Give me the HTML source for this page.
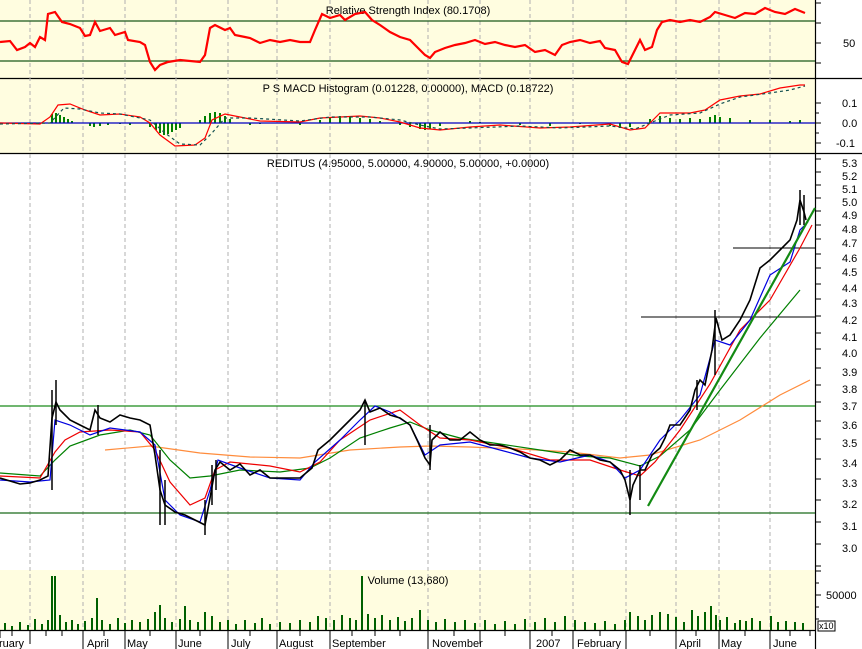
<!DOCTYPE html>
<html><head><meta charset="utf-8"><style>
html,body{margin:0;padding:0;background:#fff}
svg{display:block;font-family:"Liberation Sans",sans-serif}
</style></head><body>
<svg width="862" height="649" viewBox="0 0 862 649" xmlns="http://www.w3.org/2000/svg">
<rect x="0" y="0" width="862" height="649" fill="#fff"/>
<rect x="0" y="0" width="815" height="78" fill="#fffde0"/>
<rect x="0" y="79" width="815" height="74" fill="#fffde0"/>
<rect x="0" y="570" width="815" height="60" fill="#fffde0"/>
<g stroke="#000" stroke-width="1.2">
<line x1="0" y1="78.5" x2="862" y2="78.5"/>
<line x1="0" y1="153.5" x2="862" y2="153.5"/>
<line x1="815.5" y1="0" x2="815.5" y2="649"/>
<line x1="0" y1="630.5" x2="815" y2="630.5"/>
</g>
<g stroke="#b0b0b0" stroke-dasharray="4,3">
<line x1="30" y1="0" x2="30" y2="630"/><line x1="83" y1="0" x2="83" y2="630"/>
<line x1="125" y1="0" x2="125" y2="630"/><line x1="176" y1="0" x2="176" y2="630"/>
<line x1="228" y1="0" x2="228" y2="630"/><line x1="277" y1="0" x2="277" y2="630"/>
<line x1="330" y1="0" x2="330" y2="630"/><line x1="428" y1="0" x2="428" y2="630"/>
<line x1="480" y1="0" x2="480" y2="630"/><line x1="530" y1="0" x2="530" y2="630"/>
<line x1="573" y1="0" x2="573" y2="630"/><line x1="626" y1="0" x2="626" y2="630"/>
<line x1="676" y1="0" x2="676" y2="630"/><line x1="719" y1="0" x2="719" y2="630"/>
<line x1="770" y1="0" x2="770" y2="630"/>
</g>
<line x1="0" y1="21" x2="815" y2="21" stroke="#1a5a1a" stroke-width="1.2"/>
<line x1="0" y1="61" x2="815" y2="61" stroke="#1a5a1a" stroke-width="1.2"/>
<text x="408" y="14" font-size="11" text-anchor="middle">Relative Strength Index (80.1708)</text>
<polyline fill="none" stroke="#f00" stroke-width="2.2" points="0,42 10,41 17,50 25,47 30,43 35,47 40,37 45,40 48,14 55,12 62,22 70,24 80,28 85,36 90,35 95,22 100,31 110,28 115,35 125,32 128,40 140,42 145,45 150,62 155,70 160,65 168,62 180,60 200,62 205,55 210,28 215,25 225,30 230,28 235,35 245,37 250,38 260,43 270,40 280,42 290,40 300,42 310,42 315,30 322,14 330,18 340,15 345,20 355,14 365,12 372,20 380,25 390,32 400,37 410,40 418,48 425,55 430,58 435,52 445,48 455,45 465,43 475,40 485,44 495,42 505,45 515,47 525,45 535,52 545,50 555,55 562,45 570,42 580,40 590,43 600,41 605,48 615,50 622,62 628,64 635,50 640,40 645,50 652,47 657,30 662,22 670,20 680,22 690,20 700,22 710,17 715,12 725,15 735,18 745,13 755,14 765,8 775,12 785,14 795,9 805,13"/>
<text x="408" y="92" font-size="11" text-anchor="middle">P S MACD Histogram (0.01228, 0.00000), MACD (0.18722)</text>
<g stroke="#008000" stroke-width="2">
<path d="M52,123V114 M56,123V113 M60,123V115 M64,123V117 M68,123V119 M72,123V121 M90,123V126 M94,123V127 M100,123V126 M108,123V125 M120,123V124 M130,123V125 M150,123V127 M156,123V130 M160,123V133 M164,123V135 M168,123V134 M172,123V132 M176,123V130 M180,123V128 M200,123V120 M205,123V116 M210,123V113 M215,123V112 M220,123V113 M225,123V116 M230,123V119 M250,123V125 M260,123V124 M300,123V125 M320,123V120 M330,123V117 M340,123V116 M350,123V117 M360,123V118 M370,123V119 M380,123V121 M400,123V125 M410,123V127 M420,123V129 M425,123V130 M430,123V129 M440,123V126 M470,123V121 M480,123V122 M520,123V125 M550,123V126 M580,123V124 M610,123V126 M620,123V128 M630,123V127 M650,123V119 M660,123V116 M670,123V118 M680,123V119 M690,123V118 M700,123V119 M710,123V117 M715,123V115 M720,123V117 M730,123V118 M750,123V120 M770,123V120 M790,123V121 M800,123V120"/>
</g>
<line x1="0" y1="123" x2="815" y2="123" stroke="#0000c0" stroke-width="1.2"/>
<polyline fill="none" stroke="#f00" stroke-width="1.2" points="0,123 40,124 50,117 58,105 70,104 85,110 100,115 120,114 140,117 150,123 160,135 175,146 195,145 205,138 212,120 225,114 240,117 260,121 300,122 320,118 340,117 360,116 380,118 400,122 420,128 440,130 470,127 500,125 540,128 570,127 610,124 630,130 645,128 660,113 690,113 705,110 720,100 740,96 760,94 780,88 800,85 805,85"/>
<polyline fill="none" stroke="#145050" stroke-width="1.2" stroke-dasharray="3,3" points="0,124 50,123 64,108 80,109 100,113 120,114 150,120 165,133 180,144 200,145 212,133 225,118 250,118 300,121 330,117 370,117 400,120 420,125 440,129 470,128 520,126 560,128 610,126 635,129 655,121 670,115 700,113 720,104 740,97 770,93 790,90 805,86"/>
<text x="408" y="167" font-size="11" text-anchor="middle">REDITUS (4.95000, 5.00000, 4.90000, 5.00000, +0.0000)</text>
<line x1="0" y1="406" x2="815" y2="406" stroke="#1a8a1a" stroke-width="1.2"/>
<line x1="0" y1="513" x2="815" y2="513" stroke="#1a6a1a" stroke-width="1.2"/>
<line x1="733" y1="248" x2="815" y2="248" stroke="#000"/>
<line x1="641" y1="317" x2="815" y2="317" stroke="#000"/>
<polyline fill="none" stroke="#ff8c3c" stroke-width="1.2" points="105,450 150,446 200,453 250,457 300,458 350,450 400,447 430,446 470,447 520,449 570,452 620,458 650,455 700,440 740,420 780,395 810,380"/>
<polyline fill="none" stroke="#008000" stroke-width="1.2" points="0,473 40,476 55,460 70,446 100,435 130,430 150,435 170,460 190,478 210,476 240,470 280,472 310,468 330,458 360,438 390,428 410,422 430,430 460,438 500,444 540,450 580,456 610,458 640,466 660,456 690,430 720,390 760,338 800,290"/>
<polyline fill="none" stroke="#e00" stroke-width="1.2" points="0,476 40,478 55,452 65,440 80,432 110,430 140,432 155,450 170,482 190,505 205,498 215,470 230,462 270,466 300,472 320,462 340,440 370,420 400,410 420,425 440,438 470,440 510,448 550,460 590,460 620,470 640,476 655,462 680,430 710,384 740,330 770,300 800,248 812,225"/>
<polyline fill="none" stroke="#0000e0" stroke-width="1.2" points="0,480 30,482 50,480 55,420 70,425 90,435 110,428 140,432 155,445 165,500 180,515 200,522 210,490 218,460 240,468 270,478 300,480 315,462 340,440 360,420 375,406 390,412 410,425 425,455 440,445 470,442 500,450 530,458 560,462 590,455 610,462 625,478 640,470 660,440 680,420 700,395 715,340 730,345 750,320 770,275 790,262 800,230 808,222"/>
<polyline fill="none" stroke="#000" stroke-width="1.6" points="0,478 10,481 20,484 30,483 40,480 48,476 52,418 56,402 60,410 70,420 80,425 90,430 95,410 100,418 110,422 120,415 130,418 140,420 150,425 155,455 160,490 165,505 175,512 185,515 195,520 205,525 210,498 215,470 220,462 230,470 240,464 250,475 260,470 270,478 285,478 300,478 312,468 318,450 330,440 340,430 350,420 360,410 365,400 370,412 380,408 390,415 400,418 410,425 418,442 425,458 430,465 432,440 440,432 450,440 460,440 470,432 480,440 490,445 500,445 510,448 520,452 530,458 540,460 550,465 560,460 570,450 580,455 590,455 600,460 610,462 620,470 625,480 630,500 633,485 640,470 645,470 652,455 660,448 665,438 670,425 680,425 690,410 695,390 700,380 705,385 712,350 716,318 722,340 730,335 740,320 750,300 760,268 770,260 780,250 790,240 797,220 800,200 804,212 806,220"/>
<g stroke="#000" stroke-width="1.5">
<path d="M52,390V490 M56,380V425 M98,405V435 M160,450V525 M165,480V525 M205,500V535 M212,465V505 M216,460V490 M365,400V445 M430,425V470 M630,470V515 M640,465V500 M697,380V410 M715,310V375 M800,190V225 M804,195V225"/>
</g>
<line x1="648" y1="506" x2="815" y2="208" stroke="#138a13" stroke-width="2.2"/>
<text x="408" y="584" font-size="11" text-anchor="middle">Volume (13,680)</text>
<g stroke="#006000" stroke-width="2">
<path d="M5,630V623 M12,630V626 M20,630V622 M28,630V625 M35,630V619 M42,630V624 M48,630V620 M52,630V576 M55,630V576 M60,630V615 M66,630V622 M72,630V620 M78,630V624 M85,630V621 M92,630V618 M97,630V598 M102,630V620 M110,630V624 M118,630V618 M125,630V623 M132,630V620 M140,630V622 M148,630V619 M155,630V612 M160,630V605 M165,630V618 M172,630V622 M180,630V619 M185,630V606 M190,630V620 M198,630V622 M205,630V612 M212,630V616 M220,630V622 M228,630V620 M236,630V624 M245,630V620 M255,630V623 M262,630V618 M270,630V624 M280,630V622 M290,630V623 M300,630V620 M310,630V622 M318,630V616 M326,630V618 M334,630V620 M342,630V615 M350,630V618 M356,630V620 M362,630V576 M368,630V614 M375,630V618 M382,630V615 M390,630V620 M398,630V617 M405,630V621 M412,630V618 M420,630V610 M428,630V620 M436,630V622 M445,630V619 M455,630V622 M465,630V620 M475,630V623 M485,630V620 M495,630V624 M505,630V621 M515,630V624 M525,630V619 M535,630V622 M545,630V618 M555,630V622 M565,630V616 M575,630V620 M585,630V622 M595,630V623 M605,630V621 M615,630V624 M625,630V620 M630,630V612 M638,630V616 M645,630V620 M652,630V615 M660,630V612 M668,630V614 M676,630V617 M684,630V622 M692,630V610 M698,630V616 M705,630V612 M711,630V606 M716,630V615 M720,630V620 M727,630V617 M735,630V623 M740,630V620 M746,630V621 M752,630V618 M760,630V621 M771,630V616 M778,630V622 M786,630V621 M795,630V622 M803,630V623"/>
</g>
<g stroke="#000">
<path d="M815,3H821 M815,23H821 M815,43H821 M815,63H821 M815,103H821 M815,123H821 M815,143H821 M815,113H819 M815,133H819"/>
<path d="M815,159H821 M815,172H821 M815,185H821 M815,198H821 M815,211H821 M815,225H821 M815,239H821 M815,254H821 M815,268H821 M815,284H821 M815,299H821 M815,316H821 M815,333H821 M815,349H821 M815,368H821 M815,385H821 M815,402H821 M815,421H821 M815,439H821 M815,459H821 M815,479H821 M815,500H821 M815,522H821 M815,544H821 M815,566H821"/>
<path d="M815,571H821 M815,583H819 M815,595H821 M815,607H819 M815,619H819"/>
</g>
<g font-size="11" fill="#000">
<text x="843" y="47">50</text>
<text x="842" y="107">0.1</text>
<text x="842" y="127">0.0</text>
<text x="836" y="147">-0.1</text>
<text x="842" y="167">5.3</text><text x="842" y="180">5.2</text><text x="842" y="193">5.1</text><text x="842" y="206">5.0</text><text x="842" y="219">4.9</text><text x="842" y="233">4.8</text><text x="842" y="247">4.7</text><text x="842" y="262">4.6</text><text x="842" y="276">4.5</text><text x="842" y="292">4.4</text><text x="842" y="307">4.3</text><text x="842" y="324">4.2</text><text x="842" y="341">4.1</text><text x="842" y="357">4.0</text><text x="842" y="376">3.9</text><text x="842" y="393">3.8</text><text x="842" y="410">3.7</text><text x="842" y="429">3.6</text><text x="842" y="447">3.5</text><text x="842" y="467">3.4</text><text x="842" y="487">3.3</text><text x="842" y="508">3.2</text><text x="842" y="530">3.1</text><text x="842" y="552">3.0</text>
<text x="826" y="599">50000</text>
</g>
<rect x="818" y="621" width="17" height="10" fill="#fff" stroke="#000"/>
<text x="819" y="629" font-size="9">x10</text>
<g stroke="#000">
<path d="M0,631V638 M12,631V636 M30,631V644 M46,631V636 M62,631V636 M83,631V649 M104,631V636 M125,631V649 M150,631V636 M176,631V649 M200,631V636 M228,631V649 M250,631V636 M277,631V649 M300,631V636 M330,631V649 M352,631V636 M375,631V636 M400,631V636 M428,631V649 M454,631V636 M480,631V644 M505,631V636 M530,631V649 M552,631V636 M573,631V649 M600,631V636 M626,631V649 M650,631V636 M676,631V649 M696,631V636 M719,631V649 M745,631V636 M770,631V649 M790,631V636 M810,631V636"/>
</g>
<g font-size="11">
<text x="-1" y="647">ruary</text><text x="87" y="647">April</text><text x="127" y="647">May</text><text x="178" y="647">June</text><text x="231" y="647">July</text><text x="279" y="647">August</text><text x="332" y="647">September</text><text x="432" y="647">November</text><text x="536" y="647">2007</text><text x="577" y="647">February</text><text x="679" y="647">April</text><text x="721" y="647">May</text><text x="773" y="647">June</text>
</g>
</svg>
</body></html>
